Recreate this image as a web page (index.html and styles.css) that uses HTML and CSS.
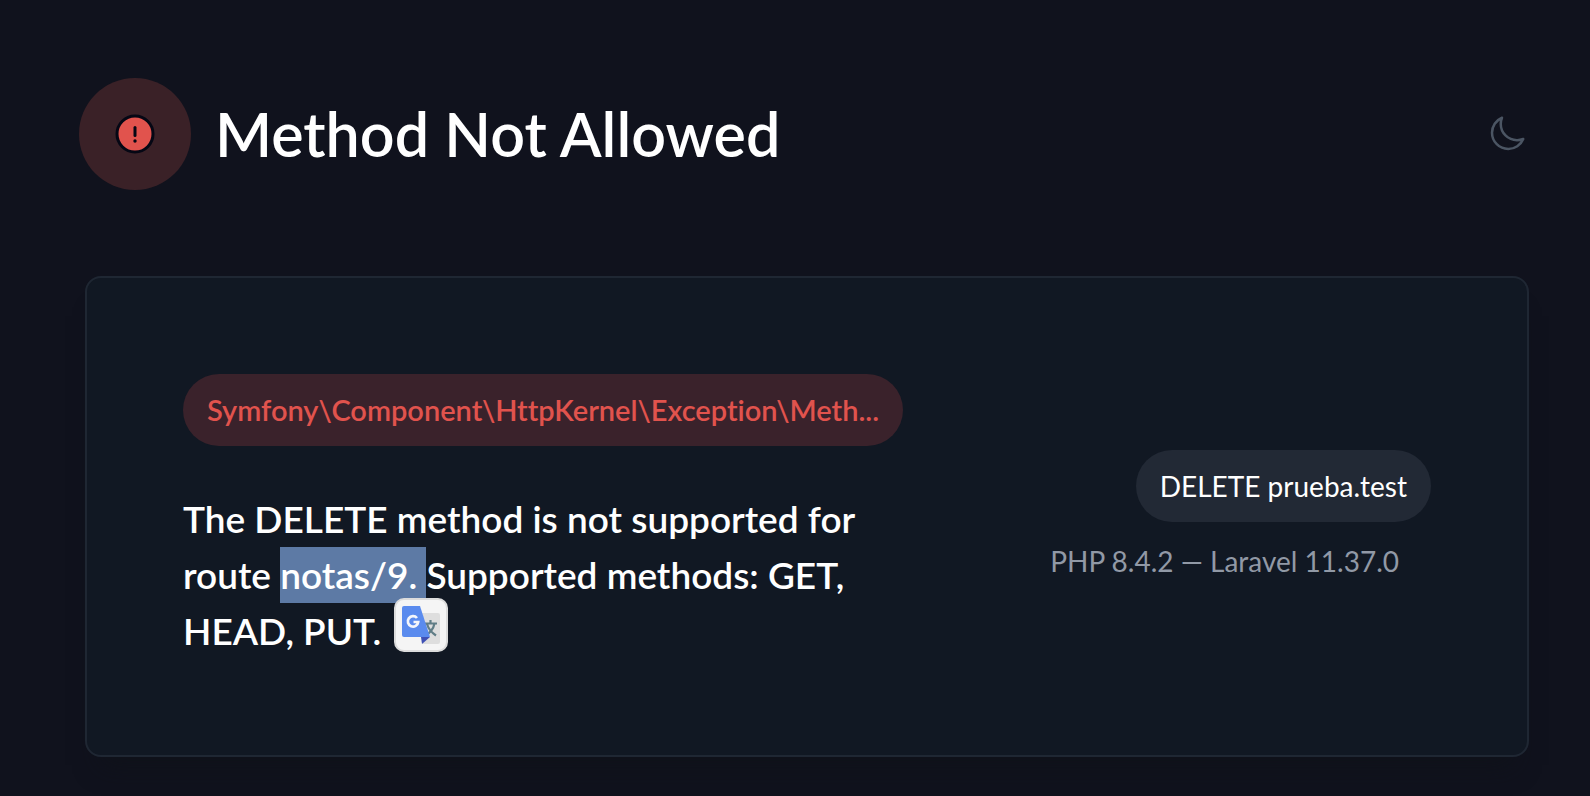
FILE: index.html
```html
<!DOCTYPE html>
<html lang="en">
<head>
<meta charset="utf-8">
<title>Method Not Allowed</title>
<link rel="stylesheet" href="styles.css">
</head>
<body>
<div class="page">
  <header class="header">
    <div class="heading">
      <span class="badge">
        <svg class="badge-icon" viewBox="0 0 40 40" aria-hidden="true">
          <circle cx="20" cy="20" r="18" fill="#e1534d" stroke="#050714" stroke-width="3"/>
          <path d="M20 13.5v8" stroke="#050714" stroke-width="3" stroke-linecap="round"/>
          <circle cx="20" cy="27" r="1.7" fill="#050714"/>
        </svg>
      </span>
      <h1 class="title">Method Not Allowed</h1>
    </div>
    <button class="theme" type="button" aria-label="Toggle theme">
      <svg class="theme-icon" viewBox="0 0 24 24" fill="none" stroke="currentColor" stroke-width="1.5" stroke-linecap="round" stroke-linejoin="round" aria-hidden="true">
        <path d="M21.752 15.002A9.718 9.718 0 0118 15.75c-5.385 0-9.75-4.365-9.75-9.75 0-1.33.266-2.597.748-3.752A9.753 9.753 0 003 11.25C3 16.635 7.365 21 12.75 21a9.753 9.753 0 009.002-5.998z"/>
      </svg>
    </button>
  </header>
  <main class="card">
    <section class="error">
      <div class="exception">Symfony\Component\HttpKernel\Exception\Meth...</div>
      <p class="message">The DELETE method is not supported for route <mark class="selected">notas/9. </mark>Supported methods: GET, HEAD, PUT.<span class="anchor"><button class="translate" type="button" aria-label="Translate">
        <svg class="translate-icon" viewBox="0 0 38 38" aria-hidden="true">
          <path d="M14 7h22a2 2 0 012 2v27a2 2 0 01-2 2H21z" fill="#dedede"/>
          <path d="M22 17.500h13M28.500 14v3.500M32.500 17.500c-1 5-4 9-9 12M25 18c1.500 5 4.500 8.500 9 11.500" fill="none" stroke="#607d86" stroke-width="2.200"/>
          <path d="M19 31h9l-8 7z" fill="#3f51b5"/>
          <path d="M2 0h16l10 31H2a2 2 0 01-2-2V2a2 2 0 012-2z" fill="#5a8bee"/>
          <path d="M15 12a5.200 5.200 0 10 1.200 4H11.500" fill="none" stroke="#f4f6fb" stroke-width="2.700"/>
        </svg>
      </button></span></p>
    </section>
    <section class="context">
      <div class="request">DELETE prueba.test</div>
      <div class="versions">PHP 8.4.2 — Laravel 11.37.0</div>
    </section>
  </main>
</div>
</body>
</html>
```
FILE: styles.css
```css
* {
  box-sizing: border-box;
}

body {
  margin: 0;
  background: #10121d;
  color: #fff;
  font-family: Lato, "Noto Sans", sans-serif;
  font-variant-ligatures: none;
}

.page {
  padding: 78px 61px 39px 79px;
}

.header {
  display: flex;
  align-items: center;
  justify-content: space-between;
}

.heading {
  display: flex;
  align-items: center;
  gap: 24px;
}

.badge {
  display: flex;
  align-items: center;
  justify-content: center;
  width: 112px;
  height: 112px;
  border-radius: 50%;
  background: #3a2127;
}

.badge-icon {
  width: 40px;
  height: 40px;
}

.title {
  margin: 0;
  font-size: 61px;
  line-height: 72px;
  font-weight: 600;
}

.theme {
  padding: 0 2px 0 0;
  border: 0;
  background: none;
  color: #4b5563;
  line-height: 0;
}

.theme-icon {
  width: 40px;
  height: 40px;
}

.card {
  display: flex;
  align-items: center;
  justify-content: space-between;
  gap: 48px;
  margin: 86px 0 0 6px;
  padding: 96px;
  border: 2px solid #1f2733;
  border-radius: 16px;
  background: #111823;
  box-shadow: 0 24px 24px -16px rgba(15, 18, 24, 0.6);
}

.error {
  width: 720px;
  min-width: 0;
}

.exception {
  padding: 8px 16px 8px 24px;
  border-radius: 36px;
  background: #3a222b;
  color: #e1534d;
  font-size: 29px;
  line-height: 56px;
  font-weight: 600;
  white-space: nowrap;
  overflow: hidden;
  text-overflow: ellipsis;
}

.message {
  margin: 45px 0 0;
  font-size: 37px;
  line-height: 56px;
  font-weight: 600;
}

.selected {
  padding: 5px 0 6px;
  background: #5d7aa5;
  color: inherit;
}

.anchor {
  position: relative;
}

.translate {
  position: absolute;
  left: 13px;
  top: -10px;
  display: flex;
  align-items: center;
  justify-content: center;
  width: 54px;
  height: 54px;
  padding: 0;
  border: 2px solid #dcdcdc;
  border-radius: 10px;
  background: #f5f5f5;
}

.translate-icon {
  width: 38px;
  height: 38px;
}

.context {
  display: flex;
  flex-direction: column;
  align-items: flex-end;
  gap: 16px;
  font-size: 28px;
}

.request {
  padding: 8px 24px;
  border-radius: 36px;
  background: #222935;
  line-height: 56px;
}

.versions {
  padding-right: 32px;
  color: #9199a6;
  line-height: 46px;
}
```
